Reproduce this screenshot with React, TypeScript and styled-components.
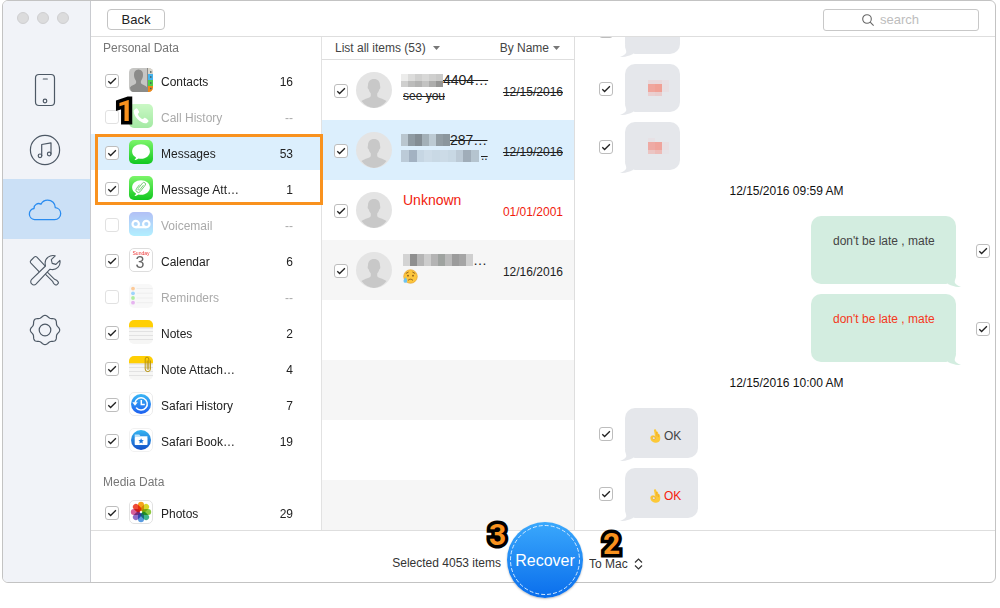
import React from "react";
import styled, { createGlobalStyle, css } from "styled-components";

const GlobalStyle = createGlobalStyle`
  * { box-sizing: border-box; }
  body {
    margin: 0;
    background: #fff;
    color: #222;
    font-family: "Liberation Sans", Arial, sans-serif;
    font-size: 12px;
    line-height: 16px;
  }
  button, input, select { font: inherit; color: inherit; }
  svg { display: block; flex: none; }
`;

const Page = styled.div`
  height: 100vh;
  padding: 0 4px 25px 2px;
`;

const Window = styled.div`
  display: flex;
  height: 100%;
  border: 1px solid #c3c3c3;
  border-radius: 6px;
`;

/* ---------- side navigation ---------- */

const Sidebar = styled.aside`
  flex: none;
  width: 88px;
  background: #f1f3f8;
  border-right: 1px solid #c9cbd0;
  border-radius: 5px 0 0 5px;
`;

const WindowDots = styled.div`
  display: flex;
  gap: 8px;
  height: 58px;
  padding: 11px 0 0 14px;
`;

const Dot = styled.span`
  width: 12px;
  height: 12px;
  border-radius: 50%;
  background: #dcdcdd;
  border: 1px solid #cfcfd1;
`;

const NavItem = styled.button<{ $active?: boolean }>`
  display: flex;
  align-items: center;
  justify-content: center;
  width: 100%;
  height: 60px;
  padding: 2px 4px 0 0;
  border: 0;
  background: ${(p) => (p.$active ? "#cbe0f6" : "transparent")};
`;

/* ---------- main frame ---------- */

const Main = styled.main`
  flex: 1;
  min-width: 0;
  display: flex;
  flex-direction: column;
`;

const Toolbar = styled.header`
  flex: none;
  display: flex;
  align-items: center;
  justify-content: space-between;
  height: 36px;
  padding: 2px 16px 0;
  border-bottom: 1px solid #dedede;
`;

const BackButton = styled.button`
  width: 58px;
  height: 21px;
  padding: 0;
  border: 1px solid #c4c4c4;
  border-radius: 4px;
  background: #fff;
  font-size: 13px;
  line-height: 19px;
`;

const SearchBox = styled.label`
  display: flex;
  align-items: center;
  gap: 6px;
  width: 156px;
  height: 22px;
  padding-left: 38px;
  border: 1px solid #c8c8c8;
  border-radius: 3px;
`;

const SearchInput = styled.input`
  flex: 1;
  min-width: 0;
  padding: 0;
  border: 0;
  outline: 0;
  background: transparent;
  font-size: 13px;
  &::placeholder { color: #bdbdbd; opacity: 1; }
`;

const Panels = styled.div`
  flex: 1;
  min-height: 0;
  display: flex;
`;

/* ---------- tick box ---------- */

const TickWrap = styled.span<{ $faded?: boolean }>`
  flex: none;
  display: grid;
  width: 14px;
  height: 14px;
  margin-top: 2px;
  opacity: ${(p) => (p.$faded ? 0.45 : 1)};
  & > * { grid-area: 1 / 1; }
  svg { pointer-events: none; }
`;

const TickInput = styled.input`
  appearance: none;
  width: 14px;
  height: 14px;
  margin: 0;
  border: 1px solid #bdbdbd;
  border-radius: 3px;
  background: #fff;
  & + svg { visibility: hidden; }
  &:checked + svg { visibility: visible; }
`;

function Tick({ label, on = true, faded }: { label: string; on?: boolean; faded?: boolean }) {
  return (
    <TickWrap $faded={faded}>
      <TickInput type="checkbox" defaultChecked={on} disabled={faded} aria-label={label} />
      <svg width="14" height="14" viewBox="0 0 14 14" fill="none" stroke="#222" strokeWidth="1.3">
        <path d="M3.3 7.2 5.6 9.5 10.9 4.2" />
      </svg>
    </TickWrap>
  );
}

/* ---------- categories ---------- */

const Categories = styled.nav`
  position: relative;
  z-index: 1;
  flex: none;
  width: 231px;
  border-right: 1px solid #e2e2e2;
`;

const SectionTitle = styled.h2`
  height: 25px;
  margin: 0;
  padding-left: 12px;
  color: #777;
  font-size: 12px;
  font-weight: 400;
  line-height: 22px;
  ul + & { margin-top: 11px; padding-top: 2px; }
`;

const CategoryList = styled.ul`
  margin: 0;
  padding: 0;
  list-style: none;
`;

const CategoryRow = styled.label<{ $selected?: boolean; $faded?: boolean }>`
  display: flex;
  align-items: center;
  height: 36px;
  padding: 0 28px 0 14px;
  background: ${(p) => (p.$selected ? "#dceffd" : "transparent")};
  color: ${(p) => (p.$faded ? "#aaa" : "#222")};
`;

const CategoryIcon = styled.span<{ $faded?: boolean }>`
  margin: 0 8px 0 10px;
  opacity: ${(p) => (p.$faded ? 0.45 : 1)};
`;

const CategoryName = styled.span`
  flex: 1;
  padding-top: 3px;
`;

const CategoryCount = styled.span`
  padding-top: 3px;
`;

const Anchor = styled.li`
  position: relative;
`;

const Outlined = styled.li`
  position: relative;
  &::after {
    content: "";
    position: absolute;
    inset: 0 -2px 1px 4px;
    border: 3px solid #f9921e;
    pointer-events: none;
  }
`;

const Step = styled.span<{ $x: number; $y: number }>`
  position: absolute;
  left: ${(p) => p.$x}px;
  top: ${(p) => p.$y}px;
  z-index: 3;
  color: #f9921e;
  font-family: Roboto, sans-serif;
  font-size: 30px;
  font-weight: 700;
  line-height: 30px;
  -webkit-text-stroke: 7px #000;
  paint-order: stroke fill;
  stroke-linejoin: round;
  pointer-events: none;
`;

/* ---------- conversation list ---------- */

const Conversations = styled.section`
  flex: none;
  display: flex;
  flex-direction: column;
  width: 253px;
  border-right: 1px solid #dedede;
`;

const ListHeader = styled.div`
  flex: none;
  display: flex;
  justify-content: space-between;
  height: 23px;
  padding: 0 14px 0 13px;
  border-bottom: 1px solid #dedede;
`;

const SortButton = styled.button<{ $gap: number }>`
  display: flex;
  align-items: center;
  gap: ${(p) => p.$gap}px;
  padding: 0;
  border: 0;
  background: none;
  color: #444;
`;

const StripedList = styled.ul`
  flex: 1;
  min-height: 0;
  margin: 0;
  padding: 0;
  overflow: hidden;
  list-style: none;
  background: repeating-linear-gradient(#fff 0 60px, #f6f6f6 60px 120px);
`;

const Conversation = styled.li<{ $selected?: boolean; $tone?: string }>`
  display: flex;
  align-items: center;
  height: 60px;
  padding: 0 11px 0 12px;
  color: ${(p) => p.$tone || "#222"};
  background: ${(p) => (p.$selected ? "#dceffd" : "transparent")};
`;

const AvatarSlot = styled.span`
  margin: 0 9px 0 8px;
`;

const Summary = styled.div`
  flex: 1;
  min-width: 0;
  height: 36px;
`;

const struck = css`
  text-decoration: line-through;
`;

const Name = styled.div<{ $struck?: boolean }>`
  display: flex;
  align-items: center;
  height: 16px;
  font-size: 14px;
  ${(p) => p.$struck && struck}
`;

const Preview = styled.div<{ $struck?: boolean }>`
  display: flex;
  align-items: center;
  height: 16px;
  ${(p) => p.$struck && struck}
`;

const Inset = styled.span`
  padding-left: 2px;
`;

const DateText = styled.time<{ $struck?: boolean }>`
  padding-top: 3px;
  ${(p) => p.$struck && struck}
`;

/* ---------- chat ---------- */

const Chat = styled.section`
  flex: 1;
  min-width: 0;
  display: flex;
  flex-direction: column;
  justify-content: flex-end;
  gap: 10px;
  padding: 0 5px 12px 24px;
  overflow: hidden;
`;

const ChatRow = styled.div<{ $mine?: boolean }>`
  flex: none;
  display: flex;
  align-items: center;
  flex-direction: ${(p) => (p.$mine ? "row-reverse" : "row")};
  gap: ${(p) => (p.$mine ? 20 : 12)}px;
`;

const ChatDate = styled.time`
  flex: none;
  height: 26px;
  padding-right: 16px;
  line-height: 22px;
  text-align: center;
  color: #111;
`;

const Bubble = styled.div<{ $mine?: boolean; $tone?: string }>`
  position: relative;
  border-radius: 10px;
  background: ${(p) => (p.$mine ? "#d3ede0" : "#e5e7eb")};
  color: ${(p) => p.$tone || "#444"};
`;

const TextBubble = styled(Bubble)`
  min-width: 145px;
  height: 68px;
  padding: 17px 18px 0 22px;
  font-size: 12px;
`;

const EmojiBubble = styled(Bubble)`
  display: flex;
  align-items: center;
  gap: 2px;
  height: 50px;
  padding: 6px 17px 0 24px;
`;

const HiddenBubble = styled(Bubble)`
  width: 55px;
  height: 48px;
  padding: 16px 0 0 23px;
`;

const Tail = styled.svg<{ $mine?: boolean }>`
  position: absolute;
  bottom: -3px;
  ${(p) => (p.$mine ? "right: -5px; transform: scaleX(-1);" : "left: -5px;")}
`;

/* ---------- footer ---------- */

const Footer = styled.footer`
  flex: none;
  display: grid;
  grid-template-columns: 1fr 76px 1fr;
  align-items: center;
  column-gap: 6px;
  height: 52px;
  padding-left: 4px;
  border-top: 1px solid #dedede;
  color: #333;
`;

const SelectedText = styled.span`
  justify-self: end;
  padding-top: 12px;
`;

const RecoverSlot = styled.div`
  position: relative;
  margin: -10px 0 -16px;
`;

const RecoverButton = styled.button`
  position: relative;
  z-index: 2;
  display: flex;
  align-items: center;
  justify-content: center;
  width: 76px;
  height: 76px;
  padding: 3px 0 0;
  border: 0;
  border-radius: 50%;
  background: linear-gradient(#3aa8fc, #0a6eec);
  box-shadow: 0 1px 2px rgba(0, 0, 0, 0.25);
  color: #fff;
  font-size: 16px;
  svg { position: absolute; inset: 0; }
`;

const Destination = styled.label`
  position: relative;
  display: flex;
  align-items: center;
  gap: 6px;
  padding-top: 14px;
`;

const DestinationSelect = styled.select`
  appearance: none;
  padding: 0;
  border: 0;
  outline: 0;
  background: transparent;
  line-height: 16px;
`;

/* ---------- drawings ---------- */

const line = { fill: "none", stroke: "#4d5865", strokeWidth: 1.2, strokeLinejoin: "round" as const, strokeLinecap: "round" as const };

const gearPath = Array.from({ length: 97 }, (_, i) => {
  const a = (i / 96) * Math.PI * 2;
  const r = 13.7 + 1 * Math.cos(8 * a);
  return `${i ? "L" : "M"}${(16 + r * Math.sin(a)).toFixed(2)} ${(16 - r * Math.cos(a)).toFixed(2)}`;
}).join("");

const PhoneIcon = () => (
  <svg width="22" height="34" viewBox="0 0 22 34" {...line}>
    <rect x="1.5" y="1.5" width="19" height="31" rx="3.5" />
    <path d="M9.3 6h4" />
    <circle cx="11" cy="28" r="1.8" />
  </svg>
);

const MusicIcon = () => (
  <svg width="32" height="32" viewBox="0 0 32 32" {...line}>
    <circle cx="16" cy="16" r="14.6" />
    <path d="M12.700 21.800V10.500l9.300-1.700v11M12.700 13l9.300-1.700" opacity="0" />
    <path d="M12.700 21.800V10.500l9.300-1.700v11.200" />
    <circle cx="11" cy="21.800" r="1.800" />
    <circle cx="20.200" cy="20" r="1.800" />
  </svg>
);

const CloudIcon = () => (
  <svg width="34" height="22" viewBox="0 0 34 22" {...line} stroke="#2a8cf0" strokeWidth={1.3}>
    <path d="M6.500 20.600a5.600 5.600 0 0 1-.5-11.100C5.800 5.700 9.800 3.300 13 5.200 14.300 2.600 16.800 1.100 19.600 1.100c4.400 0 7.700 3.400 7.700 7.600 3.200.3 5.400 2.900 5.400 5.900 0 3.300-2.700 6-6 6z" />
  </svg>
);

const ToolsIcon = () => (
  <svg width="32" height="32" viewBox="0 0 32 32" {...line} strokeWidth={1.1}>
    <path d="M9.800 17.400 1.900 9.200c-.7-.8-.7-1.900 0-2.700l3.300-3.400c.8-.7 1.900-.7 2.700 0l7.700 8.200" />
    <path d="m16.600 20.300 7 7 .9 2 1.800 1.500c.6.4 1.200.3 1.700-.2l1-1c.5-.5.5-1.100.1-1.700l-1.500-1.700-2-.9-7-7" />
    <path d="M2.700 29.900c-1.300-1.300-1.300-3.200 0-4.500L16.500 12c-1-3.900.1-7 2.600-8.900 2-1.500 4.600-2 7.100-1.300l-3.900 3.900.9 3.700 3.700 1 4-4c.5 2.500-.2 5.100-2 6.900-2.100 2.100-5 2.800-7.900 1.900L7.200 29.900c-1.300 1.300-3.200 1.300-4.500 0z" />
  </svg>
);

const GearIcon = () => (
  <svg width="32" height="32" viewBox="0 0 32 32" {...line}>
    <path d={gearPath} />
    <circle cx="16" cy="16" r="5.800" />
  </svg>
);

const Caret = () => (
  <svg width="7" height="4" viewBox="0 0 7 4" fill="#777">
    <path d="M0 0h7L3.500 4z" />
  </svg>
);

const Stepper = () => (
  <svg width="9" height="12" viewBox="0 0 9 12" fill="none" stroke="#333" strokeWidth="1.200">
    <path d="M1 4.500 4.500 1 8 4.500M1 7.500 4.500 11 8 7.500" />
  </svg>
);

const Avatar = () => (
  <svg width="36" height="36" viewBox="0 0 36 36">
    <circle cx="18" cy="18" r="18" fill="#e4e4e4" />
    <path fill="#c8c8c8" d="M18 7c-3.900 0-6 2.500-6 6.300 0 1-.6 1.600-.2 3 .2.800.7 1 1 1.300.4 1.600 1 2.800 2 3.800v2.500c0 1.800-6 2.300-9.400 5.200A18 18 0 0 0 18 36a18 18 0 0 0 12.600-6.900c-3.400-2.900-9.400-3.400-9.400-5.200v-2.500c1-1 1.600-2.200 2-3.800.3-.3.800-.5 1-1.300.4-1.400-.2-2-.2-3C24 9.500 21.900 7 18 7z" />
  </svg>
);

const OkHand = () => (
  <svg width="13" height="14" viewBox="0 0 13 14">
    <path d="M5.800.3c.8-.2 1.400.4 1.500 1.300l.2 1c.5-.4 1.300-.1 1.500.7l.4 1.800c.7-.1 1.300.3 1.500 1.200.5 2 .7 4.200-.3 5.800-.9 1.300-2.400 1.700-4 1.600-2.300-.1-4-1.200-4.800-2.900-.7-1.500-.6-3.200.5-4 1-.7 2.700-.7 3.500.2C5.900 5.200 5.300 3.300 5 1.600 4.900.9 5.200.4 5.800.3z" fill="#fcc938" />
    <path d="M3.300 8.300c.9-.9 2.500-.7 2.900.5.3 1.200-.8 2-1.800 1.700-.9-.3-1.400-1.400-1.100-2.200z" fill="#ece6d4" stroke="#dd9a20" strokeWidth=".6" />
    <path d="M7.400 2.800c.4 1.500.6 3 .6 4.600M9.300 5.200c.2.900.3 1.900.2 2.900" stroke="#e5a024" strokeWidth=".6" fill="none" />
  </svg>
);

const SadFace = () => (
  <svg width="15" height="15" viewBox="0 0 15 15">
    <circle cx="7.500" cy="7.500" r="6.800" fill="#fdc63c" stroke="#e29a25" strokeWidth=".6" />
    <path d="M2.800 4.500 5.600 3M9.400 3l2.800 1.500M5 11.400c1.300-1.600 3.700-1.600 5 0" stroke="#8a5a1c" fill="none" strokeWidth=".9" />
    <circle cx="5" cy="6.700" r=".9" fill="#8a5a1c" />
    <circle cx="10" cy="6.700" r=".9" fill="#8a5a1c" />
    <path d="M2.600 8.200c1 1.500 1.700 2.500 1.700 3.700a1.900 1.900 0 0 1-3.800 0c0-1.200 1-2.200 2.100-3.700z" fill="#6ec3ee" />
  </svg>
);

function Mosaic({ colors, width, height }: { colors: string[][]; width: number; height: number }) {
  const rowHeight = height / colors.length;
  return (
    <svg width={width} height={height} viewBox={`0 0 ${width} ${height}`} shapeRendering="crispEdges" aria-hidden="true">
      {colors.map((row, y) =>
        row.map((fill, x) => (
          <rect key={`${x}-${y}`} x={(x * width) / row.length} y={y * rowHeight} width={width / row.length + 0.5} height={rowHeight} fill={fill} />
        ))
      )}
    </svg>
  );
}

const AppIcon = ({ children }: { children: React.ReactNode }) => (
  <svg width="24" height="24" viewBox="0 0 24 24">
    {children}
  </svg>
);

const Grad = ({ id, from, to }: { id: string; from: string; to: string }) => (
  <linearGradient id={id} x1="0" y1="0" x2="0" y2="1">
    <stop offset="0" stopColor={from} />
    <stop offset="1" stopColor={to} />
  </linearGradient>
);

const ContactsIcon = () => (
  <AppIcon>
    <rect width="24" height="24" rx="4.500" fill="#c6c6c4" />
    <path d="M19 0h.5A4.500 4.500 0 0 1 24 4.500V6h-5z" fill="#d9d5cb" />
    <path d="M19 6h5v6h-5z" fill="#45b4ee" />
    <path d="M19 12h5v6h-5z" fill="#4fcf4a" />
    <path d="M19 18h5v1.500a4.500 4.500 0 0 1-4.500 4.500H19z" fill="#f08a17" />
    <path d="M18.500 0v24" stroke="#8b8b89" />
    <path d="M21 4h1.500M21 9h1.500M21 15h1.500M21 20.500h1.500" stroke="#4b5a58" strokeWidth="1.600" />
    <path d="M9.500 1.500C6.500 1.500 5 3.600 5 6.800c0 2.500.7 4.300 1.800 5.700.5.800.5 2.500-.2 3.200C5.300 17 2.500 17 1 19.500c0 2.500 1.500 4.500 3.500 4.500H18v-4.800c-1.500-1.900-4.300-2.200-5.600-3.500-.7-.7-.7-2.400-.2-3.200 1.100-1.400 1.800-3.200 1.800-5.700 0-3.200-1.500-5.300-4.500-5.300z" fill="#8b8b89" />
  </AppIcon>
);

const CallIcon = () => (
  <AppIcon>
    <defs><Grad id="call" from="#8bf07f" to="#35cf35" /></defs>
    <rect width="24" height="24" rx="5" fill="url(#call)" />
    <path d="M7.400 4.300c-1 .3-2.600 1.600-2.600 3.300 0 5.200 6.600 11.700 11.600 11.700 1.600 0 2.800-1.300 3.200-2.400.2-.7-3.300-3.400-4-3.200-.8.200-1.400 1.500-2.100 1.300-1.500-.4-4.200-3.200-4.600-4.600-.2-.8 1.100-1.300 1.300-2.100.2-.7-2-4.200-2.800-4z" fill="#fff" />
  </AppIcon>
);

const MessagesIcon = ({ clip }: { clip?: boolean }) => (
  <AppIcon>
    <defs><Grad id="msg" from="#7cf56a" to="#12c820" /></defs>
    <rect width="24" height="24" rx="5" fill="url(#msg)" />
    <path d="M12 4.200c-5 0-8.900 3.100-8.900 7.200 0 2.500 1.500 4.700 3.900 6-.2 1-.8 1.900-1.600 2.500 1.600 0 3.100-.6 4.200-1.500.8.200 1.600.3 2.400.3 5 0 8.900-3.200 8.900-7.300S17 4.200 12 4.200z" fill="#fff" />
    {clip && <path d="m14.400 9.200-3.600 4.600a1 1 0 0 1-1.600-1.300l4.300-5.400a1.700 1.700 0 0 1 2.700 2.100l-4.900 6.300a2.400 2.400 0 0 1-3.800-3l3-3.800" fill="none" stroke="#63c863" strokeWidth=".9" />}
  </AppIcon>
);

const VoicemailIcon = () => (
  <AppIcon>
    <defs><Grad id="vm" from="#5574ea" to="#55dcff" /></defs>
    <rect width="24" height="24" rx="5" fill="url(#vm)" />
    <g fill="none" stroke="#fff" strokeWidth="2.200">
      <circle cx="6.700" cy="12" r="3.200" />
      <circle cx="17.300" cy="12" r="3.200" />
      <path d="M6.700 15.200h10.600" />
    </g>
  </AppIcon>
);

const CalendarText = styled.text<{ $size: number; $fill: string }>`
  font-size: ${(p) => p.$size}px;
  fill: ${(p) => p.$fill};
  text-anchor: middle;
`;

const CalendarIcon = () => (
  <AppIcon>
    <rect x=".5" y=".5" width="23" height="23" rx="4.500" fill="#fff" stroke="#ddd" />
    <CalendarText x="12" y="7" $size={5} $fill="#e33">Sunday</CalendarText>
    <CalendarText x="11" y="20" $size={16} $fill="#666">3</CalendarText>
  </AppIcon>
);

const RemindersIcon = () => (
  <AppIcon>
    <rect width="24" height="24" rx="5" fill="#f0f0f0" />
    <path d="M7.500 4.500h16M7.500 9.200h16M7.500 14h16M7.500 18.700h16" stroke="#dadada" />
    <circle cx="4" cy="4.600" r="1.900" fill="#f98a1c" />
    <circle cx="4" cy="9.300" r="1.900" fill="#2ba0f5" />
    <circle cx="4" cy="14" r="1.900" fill="#4fd62f" />
    <circle cx="4" cy="18.700" r="1.900" fill="#c859dd" />
  </AppIcon>
);

const NotesIcon = ({ clip }: { clip?: boolean }) => (
  <AppIcon>
    <rect width="24" height="24" rx="5" fill="#f6f6f5" />
    <path d="M0 7.500V5a5 5 0 0 1 5-5h14a5 5 0 0 1 5 5v2.500z" fill="#ffcf04" />
    <path d="M0 8h24" stroke="#dcd9e4" />
    <path d="M0 11.500h24M0 15.500h24M0 19.500h24" stroke="#e2e2e2" />
    {clip && <path d="M18.200 4.500v8a.8.800 0 0 0 1.600 0V3a1.800 1.800 0 0 0-3.600 0v10a2.600 2.600 0 0 0 5.200 0V4.500" fill="none" stroke="#b8930c" />}
  </AppIcon>
);

const SafariHistoryIcon = () => (
  <AppIcon>
    <defs><Grad id="hist" from="#39b6f5" to="#1d5ff0" /></defs>
    <rect x=".5" y=".5" width="23" height="23" rx="4.500" fill="#fff" stroke="#ececec" />
    <circle cx="12" cy="12" r="10" fill="url(#hist)" />
    <path d="M7.100 15.600A6.200 6.200 0 1 0 6 10.600M12.300 8v4.600h3.500" fill="none" stroke="#fff" strokeWidth="1.500" />
    <path d="M3.300 10.200h5.400L6 13.800z" fill="#fff" />
  </AppIcon>
);

const SafariBookIcon = () => (
  <AppIcon>
    <defs><Grad id="book" from="#35b5f1" to="#1450c8" /></defs>
    <rect x=".5" y=".5" width="23" height="23" rx="4.500" fill="#fff" stroke="#f1f1f1" />
    <circle cx="12" cy="12" r="10" fill="url(#book)" />
    <path d="M5.700 6.500h4.500l1.200 1.400h7v1.400H5.700z" fill="#bfe3fa" />
    <rect x="5.700" y="9" width="12.800" height="8" rx=".8" fill="#fff" />
    <path d="m12.100 10.300.8 1.800 1.900.2-1.400 1.300.4 1.900-1.700-1-1.700 1 .4-1.900-1.400-1.300 1.900-.2z" fill="#1e78dc" />
  </AppIcon>
);

const petals = ["#f7a31c", "#d9d72a", "#8cc83f", "#3fb58c", "#5a9be0", "#8f6fc8", "#d8609a", "#ef4b35"];

const Petal = styled.rect`
  mix-blend-mode: multiply;
`;

const PhotosIcon = () => (
  <AppIcon>
    <rect x=".5" y=".5" width="23" height="23" rx="4.500" fill="#fff" stroke="#e2e2e2" />
    {petals.map((fill, i) => (
      <Petal key={fill} x="9" y="1.800" width="6" height="9.200" rx="3" fill={fill} transform={`rotate(${i * 45} 12 12)`} />
    ))}
  </AppIcon>
);

/* ---------- composed parts ---------- */

interface CategoryProps {
  icon: React.ReactNode;
  name: string;
  count: string;
  selected?: boolean;
}

function Category({ icon, name, count, selected }: CategoryProps) {
  const faded = count === "--";
  return (
    <CategoryRow $selected={selected} $faded={faded}>
      <Tick label={name} on={!faded} faded={faded} />
      <CategoryIcon $faded={faded}>{icon}</CategoryIcon>
      <CategoryName>{name}</CategoryName>
      <CategoryCount>{count}</CategoryCount>
    </CategoryRow>
  );
}

const BubbleTail = ({ mine }: { mine?: boolean }) => (
  <Tail $mine={mine} width="14" height="14" viewBox="0 0 14 14" fill={mine ? "#d3ede0" : "#e5e7eb"}>
    <path d="M5 2c0 4 2 6 1 8-1 1.800-3.500 3.200-6 3.700 4.500.8 8.500-.7 13-2.700V2z" />
  </Tail>
);

const hiddenA = [
  ["#e8d9dc", "#e8d9dc", "#e8e0e4"],
  ["#f0a59c", "#f0a095", "#e8dfe2"],
  ["#f0a59c", "#f0a095", "#e8dfe2"],
  ["#eacfd0", "#e9cccc", "#e5e7eb"],
];
const hiddenB = [
  ["#e7e1e5", "#e5e7eb", "#e5e7eb"],
  ["#eeaaa4", "#efa49c", "#e8dfe2"],
  ["#eeaaa4", "#efa49c", "#e8dfe2"],
  ["#ebc5c3", "#edbbb7", "#e6e3e7"],
];

function HiddenMessage({ colors }: { colors?: string[][] }) {
  return (
    <ChatRow>
      <Tick label="Select message" />
      <HiddenBubble>
        {colors && <Mosaic colors={colors} width={21} height={16} />}
        <BubbleTail />
      </HiddenBubble>
    </ChatRow>
  );
}

function OwnMessage({ tone }: { tone?: string }) {
  return (
    <ChatRow $mine>
      <Tick label="Select message" />
      <TextBubble $mine $tone={tone}>
        don't be late , mate
        <BubbleTail mine />
      </TextBubble>
    </ChatRow>
  );
}

function OkMessage({ tone }: { tone?: string }) {
  return (
    <ChatRow>
      <Tick label="Select message" />
      <EmojiBubble $tone={tone}>
        <OkHand />
        OK
        <BubbleTail />
      </EmojiBubble>
    </ChatRow>
  );
}

export default function App() {
  return (
    <Page>
      <GlobalStyle />
      <Window>
        <Sidebar>
          <WindowDots>
            <Dot />
            <Dot />
            <Dot />
          </WindowDots>
          <NavItem aria-label="Device"><PhoneIcon /></NavItem>
          <NavItem aria-label="Music"><MusicIcon /></NavItem>
          <NavItem aria-label="Cloud" $active><CloudIcon /></NavItem>
          <NavItem aria-label="Tools"><ToolsIcon /></NavItem>
          <NavItem aria-label="Settings"><GearIcon /></NavItem>
        </Sidebar>

        <Main>
          <Toolbar>
            <BackButton>Back</BackButton>
            <SearchBox>
              <svg width="12" height="12" viewBox="0 0 12 12" fill="none" stroke="#666" strokeWidth="1.100">
                <circle cx="5" cy="5" r="4.300" />
                <path d="m8.200 8.200 3.400 3.400" />
              </svg>
              <SearchInput type="text" placeholder="search" aria-label="search" />
            </SearchBox>
          </Toolbar>

          <Panels>
            <Categories>
              <SectionTitle>Personal Data</SectionTitle>
              <CategoryList>
                <li><Category icon={<ContactsIcon />} name="Contacts" count="16" /></li>
                <Anchor>
                  <Category icon={<CallIcon />} name="Call History" count="--" />
                  <Step $x={26} $y={-2}>1</Step>
                </Anchor>
                <Outlined>
                  <Category icon={<MessagesIcon />} name="Messages" count="53" selected />
                  <Category icon={<MessagesIcon clip />} name="Message Att…" count="1" />
                </Outlined>
                <li><Category icon={<VoicemailIcon />} name="Voicemail" count="--" /></li>
                <li><Category icon={<CalendarIcon />} name="Calendar" count="6" /></li>
                <li><Category icon={<RemindersIcon />} name="Reminders" count="--" /></li>
                <li><Category icon={<NotesIcon />} name="Notes" count="2" /></li>
                <li><Category icon={<NotesIcon clip />} name="Note Attach…" count="4" /></li>
                <li><Category icon={<SafariHistoryIcon />} name="Safari History" count="7" /></li>
                <li><Category icon={<SafariBookIcon />} name="Safari Book…" count="19" /></li>
              </CategoryList>
              <SectionTitle>Media Data</SectionTitle>
              <CategoryList>
                <li><Category icon={<PhotosIcon />} name="Photos" count="29" /></li>
              </CategoryList>
            </Categories>

            <Conversations>
              <ListHeader>
                <SortButton $gap={7}>List all items (53) <Caret /></SortButton>
                <SortButton $gap={4}>By Name <Caret /></SortButton>
              </ListHeader>
              <StripedList>
                <Conversation>
                  <Tick label="Conversation 1" />
                  <AvatarSlot><Avatar /></AvatarSlot>
                  <Summary>
                    <Name $struck>
                      <Mosaic
                        width={42}
                        height={13}
                        colors={[
                          ["#ececeb", "#dcdcdb", "#d0d0cf", "#d8d8d7", "#cfcfce", "#c9c9c8"],
                          ["#cfcfce", "#bcbcbb", "#b3b3b2", "#c3c3c2", "#adadac", "#969695"],
                        ]}
                      />
                      4404…
                    </Name>
                    <Preview $struck><Inset>see you</Inset></Preview>
                  </Summary>
                  <DateText $struck>12/15/2016</DateText>
                </Conversation>
                <Conversation $selected>
                  <Tick label="Conversation 2" />
                  <AvatarSlot><Avatar /></AvatarSlot>
                  <Summary>
                    <Name $struck>
                      <Mosaic width={49} height={12} colors={[["#b9c6cf", "#8f9ba3", "#838d94", "#a3b0b8", "#bccad3", "#929da4", "#8b969d"]]} />
                      287…
                    </Name>
                    <Preview $struck>
                      <Mosaic width={78} height={12} colors={[["#bccbd8", "#a3b2c2", "#c6d6e3", "#cddce8", "#c9d9e5", "#ccdbe7", "#c8d8e4", "#bccad6", "#a0adb9", "#b5c4cf"]]} />
                      <Inset>..</Inset>
                    </Preview>
                  </Summary>
                  <DateText $struck>12/19/2016</DateText>
                </Conversation>
                <Conversation $tone="#f11c0e">
                  <Tick label="Conversation 3" />
                  <AvatarSlot><Avatar /></AvatarSlot>
                  <Summary>
                    <Name><Inset>Unknown</Inset></Name>
                  </Summary>
                  <DateText>01/01/2001</DateText>
                </Conversation>
                <Conversation>
                  <Tick label="Conversation 4" />
                  <AvatarSlot><Avatar /></AvatarSlot>
                  <Summary>
                    <Name>
                      <Inset>
                        <Mosaic width={70} height={12} colors={[["#d3d3d3", "#8f8f8f", "#b5b5b5", "#cdcdcd", "#b4b4b4", "#9fa3a0", "#bababa", "#9c9c9c", "#a5a5a5", "#cfcfcf"]]} />
                      </Inset>
                      …
                    </Name>
                    <Preview><Inset><SadFace /></Inset></Preview>
                  </Summary>
                  <DateText>12/16/2016</DateText>
                </Conversation>
              </StripedList>
            </Conversations>

            <Chat>
              <HiddenMessage />
              <HiddenMessage colors={hiddenA} />
              <HiddenMessage colors={hiddenB} />
              <ChatDate>12/15/2016 09:59 AM</ChatDate>
              <OwnMessage />
              <OwnMessage tone="#f5381c" />
              <ChatDate>12/15/2016 10:00 AM</ChatDate>
              <OkMessage />
              <OkMessage tone="#f5220e" />
            </Chat>
          </Panels>

          <Footer>
            <SelectedText>Selected 4053 items</SelectedText>
            <RecoverSlot>
              <RecoverButton>
                <svg width="76" height="76" viewBox="0 0 76 76" fill="none" stroke="#d4eaff" strokeDasharray="4 2">
                  <circle cx="38" cy="38" r="34.500" />
                </svg>
                Recover
              </RecoverButton>
              <Step $x={-18} $y={-2}>3</Step>
            </RecoverSlot>
            <Destination>
              <DestinationSelect aria-label="Destination" defaultValue="To Mac">
                <option>To Mac</option>
              </DestinationSelect>
              <Stepper />
              <Step $x={14} $y={-13}>2</Step>
            </Destination>
          </Footer>
        </Main>
      </Window>
    </Page>
  );
}
